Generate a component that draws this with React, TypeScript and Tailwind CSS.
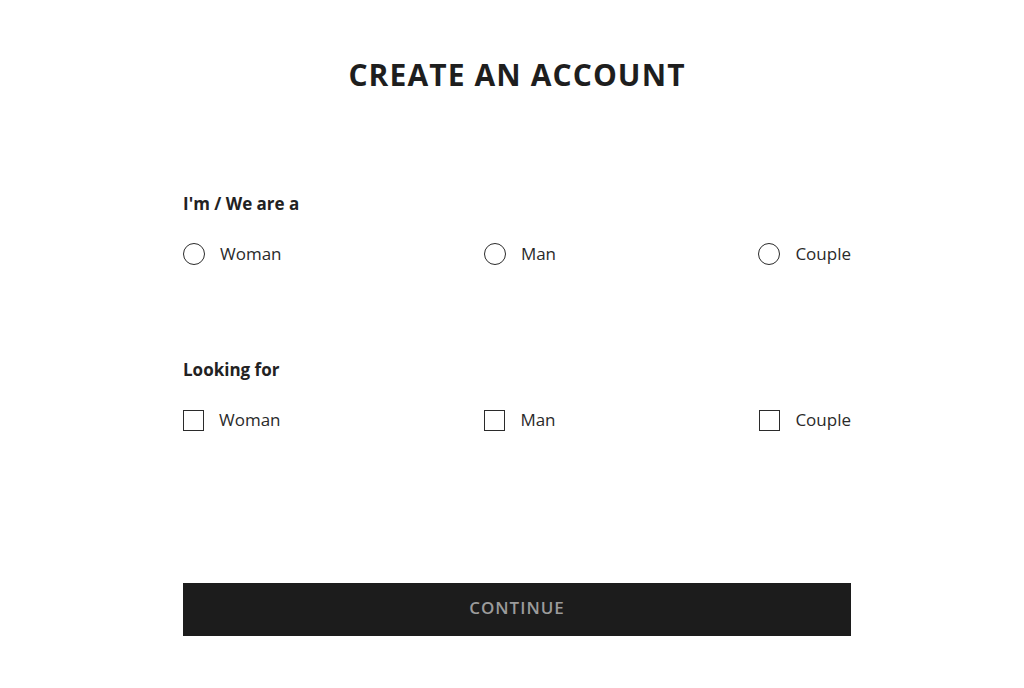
const genders = ['Woman', 'Man', 'Couple']

function Radio() {
  return <span className="block w-[22px] h-[22px] rounded-full border-[1.5px] border-[#2b2b2b] shrink-0" />
}

function Checkbox() {
  return <span className="block w-[21px] h-[21px] border-[1.5px] border-[#2b2b2b] shrink-0" />
}

function OptionRow({ kind }: { kind: 'radio' | 'checkbox' }) {
  return (
    <div className="flex justify-between items-center h-6 mt-[26px]">
      {genders.map((g) => (
        <label key={g} className="flex items-center gap-[15px] text-[17px] text-[#2a2a2a] font-normal">
          {kind === 'radio' ? <Radio /> : <Checkbox />}
          <span>{g}</span>
        </label>
      ))}
    </div>
  )
}

export default function App() {
  return (
    <div
      className="min-h-screen bg-white pt-[55px]"
      style={{ fontFamily: '"Open Sans", "Liberation Sans", sans-serif' }}
    >
      <div className="w-[668px] ml-[183px]">
        <h1 className="text-center text-[30px] leading-[40px] font-bold tracking-[1.1px] text-[#1e1e1e]">
          CREATE AN ACCOUNT
        </h1>

        {/* I'm / We are */}
        <div className="mt-[97px] text-[17px] leading-6 font-bold text-[#222]">I'm / We are a</div>
        <OptionRow kind="radio" />

        {/* Looking for */}
        <div className="mt-[92px] text-[17px] leading-6 font-bold text-[#222]">Looking for</div>
        <OptionRow kind="checkbox" />

        <button className="mt-[151px] w-full h-[53px] pb-[3px] bg-[#1c1c1c] text-[#9b9b9b] text-[17px] font-semibold tracking-[1px]">
          CONTINUE
        </button>
      </div>
    </div>
  )
}
